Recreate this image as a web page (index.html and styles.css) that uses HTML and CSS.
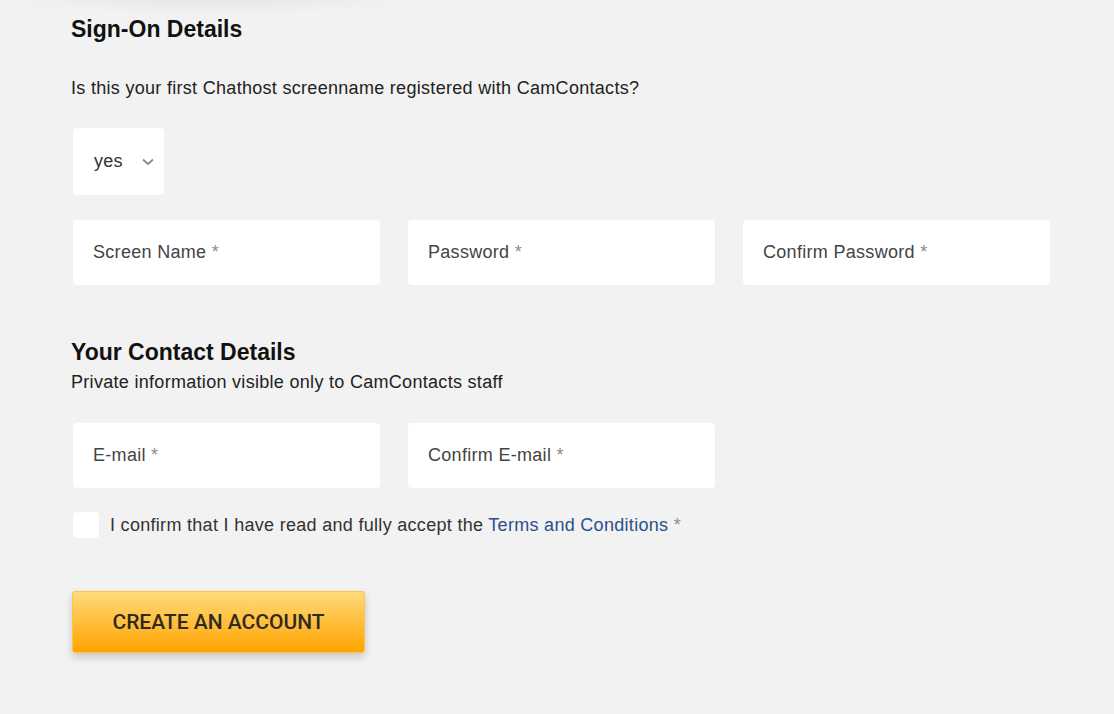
FILE: index.html
```html
<!DOCTYPE html>
<html lang="en">
<head>
<meta charset="utf-8">
<title>Sign-On Details</title>
<link rel="stylesheet" href="styles.css">
</head>
<body>
<div class="topshade"></div>
<main class="form">
  <h2 class="title first">Sign-On Details</h2>
  <p class="question">Is this your first Chathost screenname registered with CamContacts?</p>
  <div class="select">
    <span>yes</span>
    <svg class="chev" width="12" height="8" viewBox="0 0 12 8"><path d="M1 1.5 L6 6 L11 1.5" fill="none" stroke="#8a8a8a" stroke-width="1.8"/></svg>
  </div>
  <div class="row row-signon">
    <div class="field">Screen Name <span class="req">*</span></div>
    <div class="field">Password <span class="req">*</span></div>
    <div class="field">Confirm Password <span class="req">*</span></div>
  </div>
  <h2 class="title second">Your Contact Details</h2>
  <p class="sub">Private information visible only to CamContacts staff</p>
  <div class="row row-contact">
    <div class="field">E-mail <span class="req">*</span></div>
    <div class="field">Confirm E-mail <span class="req">*</span></div>
  </div>
  <label class="terms">
    <span class="box"></span>
    <span class="terms-text">I confirm that I have read and fully accept the <a href="#">Terms and Conditions</a> <span class="req">*</span></span>
  </label>
  <button class="create">CREATE AN ACCOUNT</button>
</main>
</body>
</html>
```
FILE: styles.css
```css
html, body {
  margin: 0;
  padding: 0;
  background: #f2f2f2;
}
body {
  font-family: "Liberation Sans", Arial, sans-serif;
  color: #222;
  width: 1114px;
  height: 714px;
  overflow: hidden;
  position: relative;
}
.topshade {
  position: absolute;
  left: 0;
  top: 0;
  width: 420px;
  height: 14px;
  background: radial-gradient(ellipse at 50% 0%, rgba(0,0,0,0.05), rgba(0,0,0,0) 70%);
}
.form {
  padding-left: 71px;
  padding-top: 16px;
}
.title {
  margin: 0;
  font-size: 23px;
  line-height: 26px;
  font-weight: bold;
  color: #111;
}
.question,
.sub,
.select,
.field,
.terms {
  font-size: 18px;
  letter-spacing: 0.3px;
}
.question {
  margin: 36px 0 0;
  line-height: 20px;
}
.select {
  margin: 30px 0 0 2px;
  width: 91px;
  height: 67px;
  box-sizing: border-box;
  background: #fff;
  border-radius: 4px;
  display: flex;
  align-items: center;
  padding-left: 21px;
  color: #333;
}
.select .chev {
  margin-left: 19px;
}
.row {
  display: flex;
  gap: 28px;
  margin-left: 2px;
}
.row-signon {
  margin-top: 25px;
}
.field {
  width: 307px;
  height: 65px;
  line-height: 65px;
  box-sizing: border-box;
  background: #fff;
  border-radius: 4px;
  padding-left: 20px;
  color: #444;
}
.req {
  color: #8c8c8c;
}
.second {
  margin-top: 54px;
}
.sub {
  margin: 7px 0 0;
  line-height: 20px;
}
.row-contact {
  margin-top: 31px;
}
.terms {
  margin: 24px 0 0 2px;
  display: flex;
  align-items: center;
  gap: 11px;
  color: #333;
}
.box {
  width: 26px;
  height: 26px;
  background: #fff;
  border-radius: 4px;
}
.terms a {
  color: #2b4f8c;
  text-decoration: none;
}
.create {
  display: block;
  margin: 53px 0 0 1px;
  width: 293px;
  height: 62px;
  border: 1px solid #ffc24a;
  border-radius: 3px;
  background: linear-gradient(#ffda7a, #ffa400);
  box-shadow: 0 4px 8px rgba(0,0,0,0.18);
  font-family: Roboto, "Liberation Sans", sans-serif;
  font-weight: 500;
  font-size: 21px;
  letter-spacing: 0;
  color: #2e2a20;
  cursor: pointer;
}
```
